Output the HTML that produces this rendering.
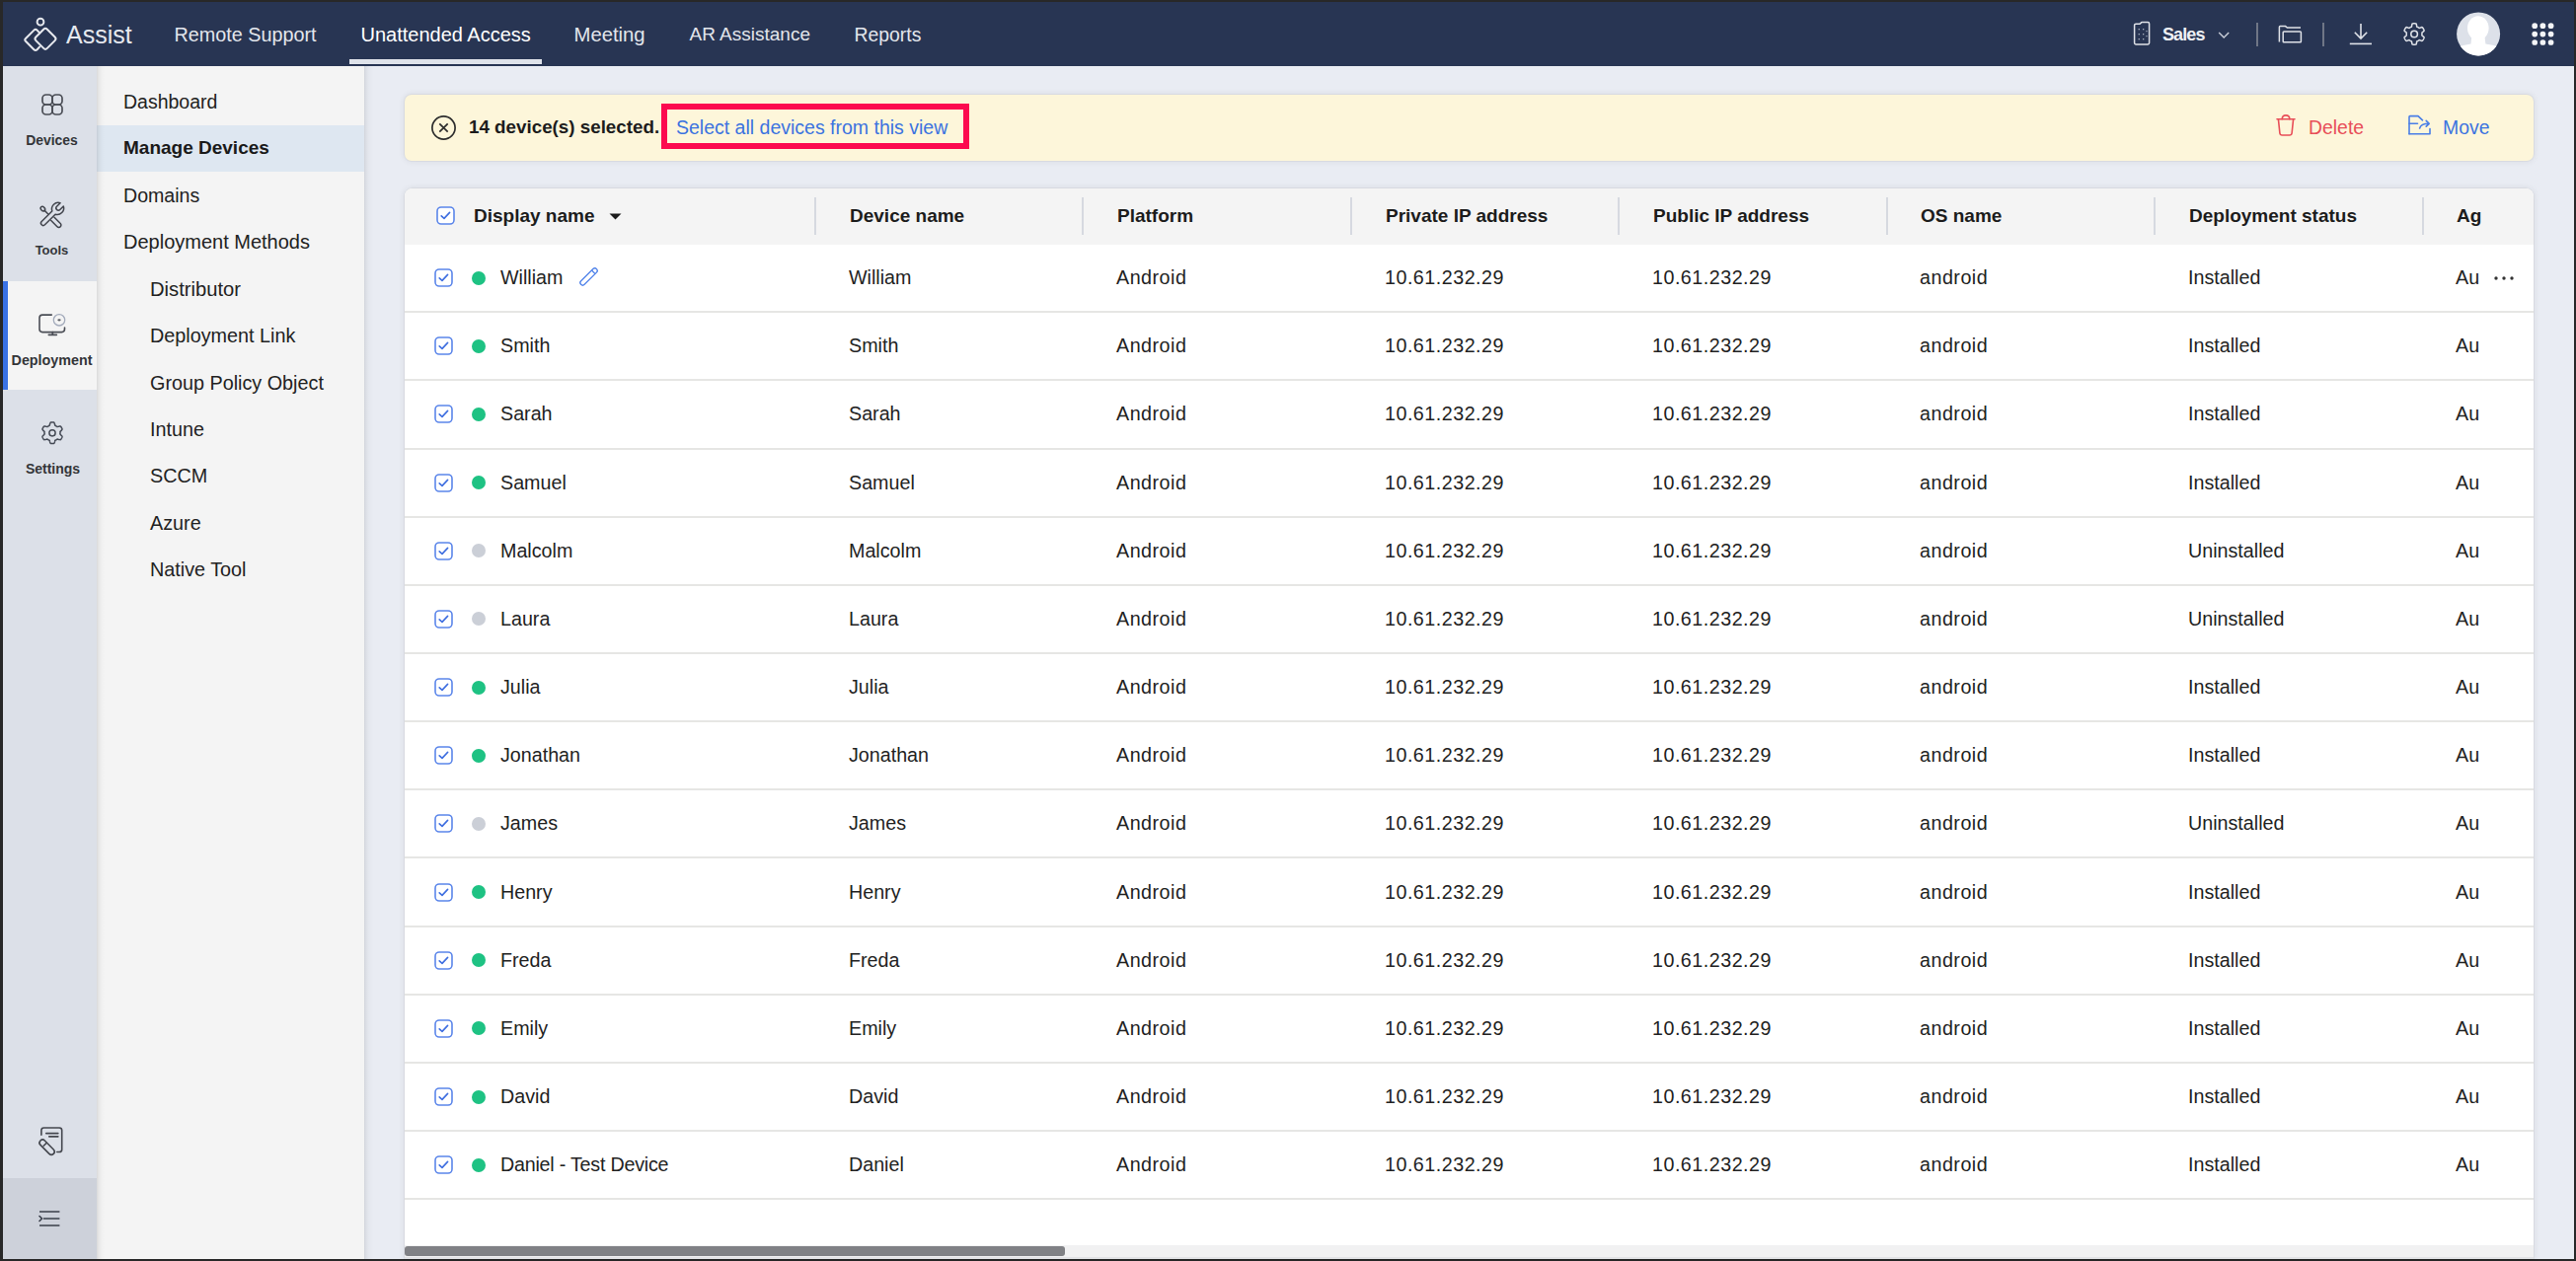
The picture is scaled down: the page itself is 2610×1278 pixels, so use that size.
<!DOCTYPE html><html><head><meta charset="utf-8"><style>
*{margin:0;padding:0;box-sizing:border-box}
html,body{width:2610px;height:1278px;overflow:hidden;background:#282828;font-family:"Liberation Sans", sans-serif;}
.abs{position:absolute}
.t{position:absolute;white-space:nowrap;line-height:24px;}
#nav{position:absolute;left:3px;top:2px;width:2605px;height:65px;background:#283553;}
.nt{color:#e3e6ec;font-size:20px;top:21px}
#rail{position:absolute;left:3px;top:67px;width:95px;height:1209px;background:#dce0e8;}
.rl{font-size:14px;font-weight:700;color:#333538;width:95px;text-align:center;left:0}
#side{position:absolute;left:98px;top:67px;width:271px;height:1209px;background:#f4f4f4;}
#main{position:absolute;left:369px;top:67px;width:2239px;height:1209px;background:#e9ecf3;}
.si{font-size:19.6px;color:#222;}
#banner{position:absolute;left:410px;top:96px;width:2157px;height:67px;background:#fdf6da;border-radius:7px;box-shadow:0 0 0 1px rgba(0,0,0,0.03),0 0 6px 1px rgba(0,0,0,0.07);}
#table{position:absolute;left:410px;top:191px;width:2157px;height:1085px;background:#fff;border-radius:8px 8px 0 0;box-shadow:0 0 0 1px rgba(0,0,0,0.03),0 0 6px 1px rgba(0,0,0,0.07)}
#thead{position:absolute;left:0;top:0;width:2157px;height:57px;background:#f4f4f4;border-radius:8px 8px 0 0}
.ht{font-size:19px;font-weight:700;color:#1c1c1c;}
.rt{font-size:19.7px;color:#222;}
.rline{position:absolute;left:0;width:2157px;height:2px;background:#e6e6e4}
.div{position:absolute;top:9px;width:2px;height:38px;background:#d6d9e0}
.cb{position:absolute}
.dot{position:absolute;width:14px;height:14px;border-radius:50%}
</style></head><body>
<div id="nav">
<svg class="abs" style="left:-3px;top:-2px" width="70" height="60" viewBox="0 0 70 60">
<circle cx="41" cy="22.2" r="3.4" fill="none" stroke="#e8eaef" stroke-width="1.9"/>
<path d="M40.2 33.4 L37.6 30.6 Q36 29 34.4 30.6 L26 39 Q24.6 40.4 26 41.8 L34.4 50.2 Q36 51.8 37.6 50.2 L40.2 47.4" fill="none" stroke="#e8eaef" stroke-width="2" stroke-linecap="round" stroke-linejoin="round"/>
<rect x="37.9" y="31.2" width="16.2" height="16.2" rx="2.6" transform="rotate(45 46 39.3)" fill="none" stroke="#e8eaef" stroke-width="2"/>
</svg>
<div class="t" style="left:64px;top:18.2px;font-size:25px;color:#e6e9ef;line-height:30px">Assist</div>
<div class="t nt" style="left:173.5px;font-size:19.8px;color:#e3e6ec">Remote Support</div>
<div class="t nt" style="left:362.5px;font-size:20.0px;color:#ffffff">Unattended Access</div>
<div class="t nt" style="left:578.5px;font-size:20.3px;color:#e3e6ec">Meeting</div>
<div class="t nt" style="left:695.5px;font-size:19.0px;color:#e3e6ec">AR Assistance</div>
<div class="t nt" style="left:862.5px;font-size:19.4px;color:#e3e6ec">Reports</div>
<div class="abs" style="left:351px;top:58px;width:195px;height:5px;background:#dfe3ea"></div>
<svg class="abs" style="left:2155px;top:17px" width="24" height="30" viewBox="0 0 24 30">
<path d="M4.6 6.6 Q4.6 5.2 6 5.2 L9.6 5.2 Q10.6 5.2 11 4.4 Q11.4 3.6 12.4 3.6 L18.2 3.6 Q19.6 3.6 19.6 5 L19.6 24.6 Q19.6 26 18.2 26 L6 26 Q4.6 26 4.6 24.6 Z" fill="none" stroke="#dfe2e8" stroke-width="1.5"/>
<g fill="#aab1c0"><rect x="8.6" y="10" width="1.3" height="1.3"/><rect x="13" y="10" width="1.3" height="1.3"/><rect x="8.6" y="15" width="1.3" height="1.3"/><rect x="13" y="15" width="1.3" height="1.3"/><rect x="8.6" y="20" width="1.3" height="1.3"/><rect x="13" y="20" width="1.3" height="1.3"/><rect x="16.4" y="12" width="1.2" height="1.2"/><rect x="16.4" y="17" width="1.2" height="1.2"/></g></svg>
<div class="t" style="left:2188px;top:20.5px;font-size:18px;letter-spacing:-0.9px;font-weight:700;color:#eef0f4">Sales</div>
<svg class="abs" style="left:2243px;top:29px" width="14" height="10" viewBox="0 0 14 10"><path d="M2.2 2 L7.2 7 L12.2 2" fill="none" stroke="#c9ced8" stroke-width="1.4"/></svg>
<div class="abs" style="left:2282.5px;top:20.5px;width:2px;height:24.5px;background:#6f7686"></div>
<svg class="abs" style="left:2303px;top:22px" width="30" height="22" viewBox="0 0 30 22">
<path d="M3.4 18.6 L3.4 3.4 Q3.4 2.6 4.2 2.6 L9.6 2.6 L11.4 4 L25 4" fill="none" stroke="#dfe2e8" stroke-width="1.5"/>
<rect x="7.2" y="8" width="18.2" height="10.8" rx="0.8" fill="none" stroke="#dfe2e8" stroke-width="1.5"/></svg>
<div class="abs" style="left:2349.5px;top:20.5px;width:2px;height:24.5px;background:#6f7686"></div>
<svg class="abs" style="left:2375px;top:19px" width="28" height="28" viewBox="0 0 28 28">
<path d="M14 3 L14 18 M7.8 11.8 L14 18 L20.2 11.8" fill="none" stroke="#dfe2e8" stroke-width="1.6"/>
<path d="M2.8 23.4 L25 23.4" stroke="#dfe2e8" stroke-width="1.6"/></svg>
<svg class="abs" style="left:2428px;top:18px" width="30" height="30" viewBox="0 0 30 30">
<path fill="none" stroke="#dfe2e8" stroke-width="1.5" d="M23.00 14.50 L22.99 14.16 L22.97 13.81 L22.93 13.47 L22.88 13.13 L23.26 12.69 L24.08 12.09 L24.87 11.42 L25.15 10.84 L24.99 10.41 L24.80 9.98 L24.59 9.56 L24.37 9.15 L24.12 8.75 L23.86 8.36 L23.59 7.99 L23.30 7.62 L22.65 7.58 L21.68 7.92 L20.75 8.34 L20.18 8.45 L19.91 8.23 L19.63 8.03 L19.34 7.84 L19.05 7.66 L18.75 7.49 L18.44 7.34 L18.12 7.20 L17.80 7.08 L17.61 6.53 L17.51 5.52 L17.32 4.50 L16.96 3.96 L16.50 3.89 L16.03 3.84 L15.57 3.81 L15.10 3.80 L14.63 3.81 L14.17 3.84 L13.70 3.89 L13.24 3.96 L12.88 4.50 L12.69 5.52 L12.59 6.53 L12.40 7.08 L12.08 7.20 L11.76 7.34 L11.45 7.49 L11.15 7.66 L10.86 7.84 L10.57 8.03 L10.29 8.23 L10.02 8.45 L9.45 8.34 L8.52 7.92 L7.55 7.58 L6.90 7.62 L6.61 7.99 L6.34 8.36 L6.08 8.75 L5.83 9.15 L5.61 9.56 L5.40 9.98 L5.21 10.41 L5.05 10.84 L5.33 11.42 L6.12 12.09 L6.94 12.69 L7.32 13.13 L7.27 13.47 L7.23 13.81 L7.21 14.16 L7.20 14.50 L7.21 14.84 L7.23 15.19 L7.27 15.53 L7.32 15.87 L6.94 16.31 L6.12 16.91 L5.33 17.58 L5.05 18.16 L5.21 18.59 L5.40 19.02 L5.61 19.44 L5.83 19.85 L6.08 20.25 L6.34 20.64 L6.61 21.01 L6.90 21.38 L7.55 21.42 L8.52 21.08 L9.45 20.66 L10.02 20.55 L10.29 20.77 L10.57 20.97 L10.86 21.16 L11.15 21.34 L11.45 21.51 L11.76 21.66 L12.08 21.80 L12.40 21.92 L12.59 22.47 L12.69 23.48 L12.88 24.50 L13.24 25.04 L13.70 25.11 L14.17 25.16 L14.63 25.19 L15.10 25.20 L15.57 25.19 L16.03 25.16 L16.50 25.11 L16.96 25.04 L17.32 24.50 L17.51 23.48 L17.61 22.47 L17.80 21.92 L18.12 21.80 L18.44 21.66 L18.75 21.51 L19.05 21.34 L19.34 21.16 L19.63 20.97 L19.91 20.77 L20.18 20.55 L20.75 20.66 L21.68 21.08 L22.65 21.42 L23.30 21.38 L23.59 21.01 L23.86 20.64 L24.12 20.25 L24.37 19.85 L24.59 19.44 L24.80 19.02 L24.99 18.59 L25.15 18.16 L24.87 17.58 L24.08 16.91 L23.26 16.31 L22.88 15.87 L22.93 15.53 L22.97 15.19 L22.99 14.84 Z"/>
<circle cx="15.1" cy="14.5" r="3.3" fill="none" stroke="#dfe2e8" stroke-width="1.6"/></svg>
<svg class="abs" style="left:2486px;top:10px" width="46" height="46" viewBox="0 0 46 46">
<defs><clipPath id="av"><circle cx="22.1" cy="22.4" r="22"/></clipPath></defs>
<circle cx="22.1" cy="22.4" r="22" fill="#dde1e9"/>
<g clip-path="url(#av)" fill="#ffffff"><ellipse cx="21.8" cy="16.6" rx="10.8" ry="12.4"/><path d="M-2 46 L-2 37 Q5 33.6 14.5 32.4 L15.2 26 L28.6 26 L29.4 32.4 Q39 33.6 46 37 L46 46 Z"/></g></svg>
<svg class="abs" style="left:2562px;top:21px" width="26" height="26" viewBox="0 0 26 26"><g fill="#f4f5f7"><circle cx="3.2" cy="3.2" r="2.85"/><circle cx="3.2" cy="11.6" r="2.85"/><circle cx="3.2" cy="20.0" r="2.85"/><circle cx="11.4" cy="3.2" r="2.85"/><circle cx="11.4" cy="11.6" r="2.85"/><circle cx="11.4" cy="20.0" r="2.85"/><circle cx="19.6" cy="3.2" r="2.85"/><circle cx="19.6" cy="11.6" r="2.85"/><circle cx="19.6" cy="20.0" r="2.85"/></g></svg>
</div>
<div id="rail">
<div class="abs" style="left:0;top:218px;width:95px;height:110px;background:#f4f4f4"></div>
<div class="abs" style="left:0;top:218px;width:5px;height:110px;background:#3a72e6"></div>
<svg class="abs" style="left:38px;top:27.3px" width="24" height="24" viewBox="0 0 24 24"><g fill="none" stroke="#4a4d55" stroke-width="1.7">
<rect x="2" y="2" width="10" height="10" rx="3.6"/><rect x="12" y="2" width="10" height="10" rx="3.6"/><rect x="2" y="12" width="10" height="10" rx="3.6"/><rect x="12" y="12" width="10" height="10" rx="3.6"/></g></svg>
<div class="t rl" style="left:2px;top:63px;font-size:13.9px">Devices</div>
<svg class="abs" style="left:27px;top:129px" width="45" height="45" viewBox="0 0 45 45"><g fill="none" stroke="#42454d" stroke-width="1.5" stroke-linejoin="round" stroke-linecap="round">
<path d="M22.78 17.96 A6.6 6.6 0 0 1 31.05 9.7 L27.52 13.22 A2.3 2.3 0 0 0 30.78 16.48 L34.3 12.95 A6.6 6.6 0 0 1 26.04 21.22 L15.43 31.83 A2.3 2.3 0 0 1 12.17 28.57 Z"/>
<ellipse cx="13.4" cy="15.6" rx="2.5" ry="1.9" transform="rotate(45 13.4 15.6)"/>
<path d="M15.2 17.4 L18.6 20.8"/>
<path d="M25.03 24.27 L31.23 30.47 A2.3 2.3 0 0 1 27.97 33.73 L21.77 27.53"/>
</g></svg>
<div class="t rl" style="left:2px;top:175px;font-size:13px">Tools</div>
<svg class="abs" style="left:27px;top:238px" width="45" height="45" viewBox="0 0 45 45"><g fill="none" stroke="#4a4d55" stroke-width="1.6" stroke-linecap="round">
<path d="M22.3 14.1 L13 14.1 Q10 14.1 10 17.1 L10 28.6 Q10 31.6 13 31.6 L32.5 31.6 Q35.5 31.6 35.5 28.6 L35.5 27"/>
<path d="M23.3 31.6 L23.3 34.2 M19.4 34.3 L27.3 34.3" stroke-width="1.8"/></g>
<circle cx="30" cy="19.3" r="5.7" fill="none" stroke="#a3abbb" stroke-width="1.3"/><ellipse cx="30" cy="19.3" rx="1.7" ry="1.1" fill="#5a5d64"/></svg>
<div class="t rl" style="left:2px;top:286px;font-size:14.3px">Deployment</div>
<svg class="abs" style="left:35px;top:357px" width="30" height="30" viewBox="0 0 30 30">
<path fill="none" stroke="#454a55" stroke-width="1.5" d="M23.00 14.80 L22.99 14.45 L22.97 14.10 L22.93 13.76 L23.02 13.39 L23.54 12.91 L24.08 12.37 L24.59 11.78 L25.02 11.15 L24.98 10.67 L24.79 10.24 L24.58 9.81 L24.35 9.40 L24.11 9.00 L23.85 8.61 L23.57 8.23 L23.17 7.95 L22.41 8.01 L21.65 8.15 L20.91 8.35 L20.23 8.56 L19.87 8.45 L19.59 8.25 L19.30 8.05 L19.00 7.87 L18.69 7.70 L18.38 7.55 L18.06 7.41 L17.78 7.15 L17.63 6.46 L17.43 5.72 L17.18 4.99 L16.85 4.30 L16.41 4.09 L15.94 4.04 L15.47 4.01 L15.00 4.00 L14.53 4.01 L14.06 4.04 L13.59 4.09 L13.15 4.30 L12.82 4.99 L12.57 5.72 L12.37 6.46 L12.22 7.15 L11.94 7.41 L11.62 7.55 L11.31 7.70 L11.00 7.87 L10.70 8.05 L10.41 8.25 L10.13 8.45 L9.77 8.56 L9.09 8.35 L8.35 8.15 L7.59 8.01 L6.83 7.95 L6.43 8.23 L6.15 8.61 L5.89 9.00 L5.65 9.40 L5.42 9.81 L5.21 10.24 L5.02 10.67 L4.98 11.15 L5.41 11.78 L5.92 12.37 L6.46 12.91 L6.98 13.39 L7.07 13.76 L7.03 14.10 L7.01 14.45 L7.00 14.80 L7.01 15.15 L7.03 15.50 L7.07 15.84 L6.98 16.21 L6.46 16.69 L5.92 17.23 L5.41 17.82 L4.98 18.45 L5.02 18.93 L5.21 19.36 L5.42 19.79 L5.65 20.20 L5.89 20.60 L6.15 20.99 L6.43 21.37 L6.83 21.65 L7.59 21.59 L8.35 21.45 L9.09 21.25 L9.77 21.04 L10.13 21.15 L10.41 21.35 L10.70 21.55 L11.00 21.73 L11.31 21.90 L11.62 22.05 L11.94 22.19 L12.22 22.45 L12.37 23.14 L12.57 23.88 L12.82 24.61 L13.15 25.30 L13.59 25.51 L14.06 25.56 L14.53 25.59 L15.00 25.60 L15.47 25.59 L15.94 25.56 L16.41 25.51 L16.85 25.30 L17.18 24.61 L17.43 23.88 L17.63 23.14 L17.78 22.45 L18.06 22.19 L18.38 22.05 L18.69 21.90 L19.00 21.73 L19.30 21.55 L19.59 21.35 L19.87 21.15 L20.23 21.04 L20.91 21.25 L21.65 21.45 L22.41 21.59 L23.17 21.65 L23.57 21.37 L23.85 20.99 L24.11 20.60 L24.35 20.20 L24.58 19.79 L24.79 19.36 L24.98 18.93 L25.02 18.45 L24.59 17.82 L24.08 17.23 L23.54 16.69 L23.02 16.21 L22.93 15.84 L22.97 15.50 L22.99 15.15 Z"/>
<circle cx="15" cy="14.8" r="3.1" fill="none" stroke="#454a55" stroke-width="1.5"/></svg>
<div class="t rl" style="left:3px;top:396px;font-size:14px">Settings</div>
<svg class="abs" style="left:27px;top:1063px" width="40" height="45" viewBox="0 0 40 45"><g fill="none" stroke="#44474e" stroke-width="1.6" stroke-linecap="round" stroke-linejoin="round">
<path d="M11.9 20.3 L11.9 15.6 Q11.9 13 14.5 13 L30.1 13 Q32.7 13 32.7 15.6 L32.7 34.9 Q32.7 37.5 30.1 37.5 L27.8 37.5"/>
<path d="M16.8 18.6 L28.8 18.6 M19.8 21.8 L28.8 21.8" stroke-width="1.7"/>
<rect x="8.2" y="29.6" width="18.8" height="6.2" rx="3.1" transform="rotate(45 17.6 32.7)"/>
<path d="M12.6 29.7 L15.4 26.9" transform="translate(1.6 1.6)"/></g></svg>
<div class="abs" style="left:0;top:1127px;width:95px;height:82px;background:#cdd1da"></div>
<svg class="abs" style="left:36px;top:1159px" width="24" height="18" viewBox="0 0 24 18"><g fill="none" stroke="#3a3f4a" stroke-width="1.6">
<path d="M1 2 L21.4 2 M5 9 L21.4 9 M1 16 L21.4 16"/><path d="M1 6.5 L3.5 9 L1 11.5" stroke-linecap="round"/></g></svg>
</div>
<div id="side">
<div class="abs" style="left:0;top:60px;width:271px;height:47px;background:#dee7f1"></div>
<div class="t si" style="left:27px;top:23.9px;font-size:19.5px;">Dashboard</div>
<div class="t si" style="left:27px;top:71.3px;font-size:19.0px;font-weight:700;color:#1a1a1a;">Manage Devices</div>
<div class="t si" style="left:27px;top:118.8px;font-size:19.6px;">Domains</div>
<div class="t si" style="left:27px;top:166.2px;font-size:20.0px;">Deployment Methods</div>
<div class="t si" style="left:54px;top:213.7px;font-size:20.2px;">Distributor</div>
<div class="t si" style="left:54px;top:261.1px;font-size:19.8px;">Deployment Link</div>
<div class="t si" style="left:54px;top:308.5px;font-size:19.8px;">Group Policy Object</div>
<div class="t si" style="left:54px;top:356.0px;font-size:19.8px;">Intune</div>
<div class="t si" style="left:54px;top:403.4px;font-size:19.8px;">SCCM</div>
<div class="t si" style="left:54px;top:450.9px;font-size:19.8px;">Azure</div>
<div class="t si" style="left:54px;top:498.3px;font-size:19.8px;">Native Tool</div>
</div>
<div id="main"></div>
<div class="abs" style="left:369px;top:67px;width:10px;height:1209px;background:linear-gradient(90deg,rgba(0,0,0,0.10) 0px,rgba(0,0,0,0.05) 2px,rgba(0,0,0,0.02) 5px,rgba(0,0,0,0) 10px)"></div>
<div class="abs" style="left:98px;top:67px;width:8px;height:1209px;background:linear-gradient(90deg,rgba(0,0,0,0.11) 0px,rgba(0,0,0,0.055) 2px,rgba(0,0,0,0.02) 5px,rgba(0,0,0,0) 8px)"></div>
<div id="banner">
<svg class="abs" style="left:26px;top:20px" width="27" height="27" viewBox="0 0 27 27"><circle cx="13.5" cy="13.5" r="11.6" fill="none" stroke="#2d2d2d" stroke-width="1.7"/><path d="M9.3 9.3 L17.7 17.7 M17.7 9.3 L9.3 17.7" stroke="#2d2d2d" stroke-width="1.7"/></svg>
<div class="t" style="left:65px;top:21px;font-size:18.8px;font-weight:700;color:#1c1c1c">14 device(s) selected.</div>
<div class="abs" style="left:260px;top:9px;width:312px;height:46px;border:6px solid #fc0a4f"></div>
<div class="t" style="left:275px;top:21px;font-size:19.5px;color:#3b73e0">Select all devices from this view</div>
<svg class="abs" style="left:1895px;top:20px" width="22" height="26" viewBox="0 0 22 26"><g fill="none" stroke="#e84e58" stroke-width="1.6" stroke-linejoin="round" stroke-linecap="round">
<path d="M2 4.7 L20 4.7 M3.4 4.7 L4.9 19 Q5.2 21 7.2 21 L14.8 21 Q16.8 21 17.1 19 L18.6 4.7"/><path d="M7.2 4.7 Q7.2 0.9 11 0.9 Q14.8 0.9 14.8 4.7"/></g></svg>
<div class="t" style="left:1929px;top:21px;font-size:19.4px;color:#e84e58">Delete</div>
<svg class="abs" style="left:2029px;top:18px" width="26" height="26" viewBox="0 0 26 26"><g fill="none" stroke="#4a7ee6" stroke-width="1.6" stroke-linejoin="round" stroke-linecap="round">
<path d="M2 21.7 L2 4.4 Q2 3.6 2.8 3.6 L11 3.6 L15.5 7.8"/><path d="M2 21.7 L23 21.7 L23 16.5"/><path d="M2 11.3 L10.5 11.3"/><path d="M12.6 16 Q14 11.3 21.8 11.3 M19.2 8.4 L22.2 11.3 L19.2 14.2"/></g></svg>
<div class="t" style="left:2065px;top:21px;font-size:19.4px;color:#3b73e0">Move</div>
</div>
<div id="table">
<div id="thead">
<svg class="cb" style="left:32px;top:18px" width="19" height="19" viewBox="0 0 19 19"><rect x="1" y="1" width="17" height="17" rx="4" fill="#fff" stroke="#5b86ea" stroke-width="1.6"/><path d="M5.2 9.8 L8 12.4 L13.6 6.4" fill="none" stroke="#3f6fe0" stroke-width="1.6" stroke-linecap="round" stroke-linejoin="round"/></svg>
<div class="t ht" style="left:70px;top:16px">Display name</div>
<svg class="abs" style="left:207px;top:25px" width="13" height="7" viewBox="0 0 13 7"><path d="M0.5 0.5 L12.5 0.5 L6.5 6.5 Z" fill="#1c1c1c"/></svg>
<div class="div" style="left:415px"></div>
<div class="t ht" style="left:451px;top:16px">Device name</div>
<div class="div" style="left:686px"></div>
<div class="t ht" style="left:722px;top:16px">Platform</div>
<div class="div" style="left:958px"></div>
<div class="t ht" style="left:994px;top:16px">Private IP address</div>
<div class="div" style="left:1229px"></div>
<div class="t ht" style="left:1265px;top:16px">Public IP address</div>
<div class="div" style="left:1501px"></div>
<div class="t ht" style="left:1536px;top:16px">OS name</div>
<div class="div" style="left:1772px"></div>
<div class="t ht" style="left:1808px;top:16px">Deployment status</div>
<div class="div" style="left:2044px"></div>
<div class="t ht" style="left:2079px;top:16px">Ag</div>
</div>
<svg class="cb" style="left:30px;top:81.1px" width="19" height="19" viewBox="0 0 19 19"><rect x="1" y="1" width="17" height="17" rx="4" fill="#fff" stroke="#5b86ea" stroke-width="1.6"/><path d="M5.2 9.8 L8 12.4 L13.6 6.4" fill="none" stroke="#3f6fe0" stroke-width="1.6" stroke-linecap="round" stroke-linejoin="round"/></svg>
<div class="dot" style="left:68px;top:83.6px;background:#1ec283"></div>
<div class="t rt" style="left:97px;top:78.1px">William</div>
<div class="t rt" style="left:450px;top:78.1px">William</div>
<div class="t rt" style="left:721px;top:78.1px;letter-spacing:0.5px">Android</div>
<div class="t rt" style="left:993px;top:78.1px;letter-spacing:0.5px">10.61.232.29</div>
<div class="t rt" style="left:1264px;top:78.1px;letter-spacing:0.5px">10.61.232.29</div>
<div class="t rt" style="left:1535px;top:78.1px;letter-spacing:0.5px">android</div>
<div class="t rt" style="left:1807px;top:78.1px">Installed</div>
<div class="t rt" style="left:2078px;top:78.1px">Au</div>
<svg class="abs" style="left:170px;top:74.0px" width="35" height="30" viewBox="0 0 35 30"><g fill="none" stroke="#5284ea" stroke-width="1.35"><rect x="5.4" y="12.95" width="22.3" height="5" rx="2.5" transform="rotate(-44.7 16.55 15.45)"/><path d="M19.52 9.0 L23.04 12.55"/></g></svg>
<svg class="abs" style="left:2116px;top:87.6px" width="22" height="6" viewBox="0 0 22 6"><g fill="#333"><circle cx="3" cy="3" r="1.7"/><circle cx="11" cy="3" r="1.7"/><circle cx="19" cy="3" r="1.7"/></g></svg>
<div class="rline" style="top:124.2px"></div>
<svg class="cb" style="left:30px;top:150.2px" width="19" height="19" viewBox="0 0 19 19"><rect x="1" y="1" width="17" height="17" rx="4" fill="#fff" stroke="#5b86ea" stroke-width="1.6"/><path d="M5.2 9.8 L8 12.4 L13.6 6.4" fill="none" stroke="#3f6fe0" stroke-width="1.6" stroke-linecap="round" stroke-linejoin="round"/></svg>
<div class="dot" style="left:68px;top:152.7px;background:#1ec283"></div>
<div class="t rt" style="left:97px;top:147.2px">Smith</div>
<div class="t rt" style="left:450px;top:147.2px">Smith</div>
<div class="t rt" style="left:721px;top:147.2px;letter-spacing:0.5px">Android</div>
<div class="t rt" style="left:993px;top:147.2px;letter-spacing:0.5px">10.61.232.29</div>
<div class="t rt" style="left:1264px;top:147.2px;letter-spacing:0.5px">10.61.232.29</div>
<div class="t rt" style="left:1535px;top:147.2px;letter-spacing:0.5px">android</div>
<div class="t rt" style="left:1807px;top:147.2px">Installed</div>
<div class="t rt" style="left:2078px;top:147.2px">Au</div>
<div class="rline" style="top:193.3px"></div>
<svg class="cb" style="left:30px;top:219.4px" width="19" height="19" viewBox="0 0 19 19"><rect x="1" y="1" width="17" height="17" rx="4" fill="#fff" stroke="#5b86ea" stroke-width="1.6"/><path d="M5.2 9.8 L8 12.4 L13.6 6.4" fill="none" stroke="#3f6fe0" stroke-width="1.6" stroke-linecap="round" stroke-linejoin="round"/></svg>
<div class="dot" style="left:68px;top:221.9px;background:#1ec283"></div>
<div class="t rt" style="left:97px;top:216.4px">Sarah</div>
<div class="t rt" style="left:450px;top:216.4px">Sarah</div>
<div class="t rt" style="left:721px;top:216.4px;letter-spacing:0.5px">Android</div>
<div class="t rt" style="left:993px;top:216.4px;letter-spacing:0.5px">10.61.232.29</div>
<div class="t rt" style="left:1264px;top:216.4px;letter-spacing:0.5px">10.61.232.29</div>
<div class="t rt" style="left:1535px;top:216.4px;letter-spacing:0.5px">android</div>
<div class="t rt" style="left:1807px;top:216.4px">Installed</div>
<div class="t rt" style="left:2078px;top:216.4px">Au</div>
<div class="rline" style="top:262.5px"></div>
<svg class="cb" style="left:30px;top:288.6px" width="19" height="19" viewBox="0 0 19 19"><rect x="1" y="1" width="17" height="17" rx="4" fill="#fff" stroke="#5b86ea" stroke-width="1.6"/><path d="M5.2 9.8 L8 12.4 L13.6 6.4" fill="none" stroke="#3f6fe0" stroke-width="1.6" stroke-linecap="round" stroke-linejoin="round"/></svg>
<div class="dot" style="left:68px;top:291.1px;background:#1ec283"></div>
<div class="t rt" style="left:97px;top:285.6px">Samuel</div>
<div class="t rt" style="left:450px;top:285.6px">Samuel</div>
<div class="t rt" style="left:721px;top:285.6px;letter-spacing:0.5px">Android</div>
<div class="t rt" style="left:993px;top:285.6px;letter-spacing:0.5px">10.61.232.29</div>
<div class="t rt" style="left:1264px;top:285.6px;letter-spacing:0.5px">10.61.232.29</div>
<div class="t rt" style="left:1535px;top:285.6px;letter-spacing:0.5px">android</div>
<div class="t rt" style="left:1807px;top:285.6px">Installed</div>
<div class="t rt" style="left:2078px;top:285.6px">Au</div>
<div class="rline" style="top:331.6px"></div>
<svg class="cb" style="left:30px;top:357.7px" width="19" height="19" viewBox="0 0 19 19"><rect x="1" y="1" width="17" height="17" rx="4" fill="#fff" stroke="#5b86ea" stroke-width="1.6"/><path d="M5.2 9.8 L8 12.4 L13.6 6.4" fill="none" stroke="#3f6fe0" stroke-width="1.6" stroke-linecap="round" stroke-linejoin="round"/></svg>
<div class="dot" style="left:68px;top:360.2px;background:#cbcfd7"></div>
<div class="t rt" style="left:97px;top:354.7px">Malcolm</div>
<div class="t rt" style="left:450px;top:354.7px">Malcolm</div>
<div class="t rt" style="left:721px;top:354.7px;letter-spacing:0.5px">Android</div>
<div class="t rt" style="left:993px;top:354.7px;letter-spacing:0.5px">10.61.232.29</div>
<div class="t rt" style="left:1264px;top:354.7px;letter-spacing:0.5px">10.61.232.29</div>
<div class="t rt" style="left:1535px;top:354.7px;letter-spacing:0.5px">android</div>
<div class="t rt" style="left:1807px;top:354.7px">Uninstalled</div>
<div class="t rt" style="left:2078px;top:354.7px">Au</div>
<div class="rline" style="top:400.8px"></div>
<svg class="cb" style="left:30px;top:426.9px" width="19" height="19" viewBox="0 0 19 19"><rect x="1" y="1" width="17" height="17" rx="4" fill="#fff" stroke="#5b86ea" stroke-width="1.6"/><path d="M5.2 9.8 L8 12.4 L13.6 6.4" fill="none" stroke="#3f6fe0" stroke-width="1.6" stroke-linecap="round" stroke-linejoin="round"/></svg>
<div class="dot" style="left:68px;top:429.4px;background:#cbcfd7"></div>
<div class="t rt" style="left:97px;top:423.9px">Laura</div>
<div class="t rt" style="left:450px;top:423.9px">Laura</div>
<div class="t rt" style="left:721px;top:423.9px;letter-spacing:0.5px">Android</div>
<div class="t rt" style="left:993px;top:423.9px;letter-spacing:0.5px">10.61.232.29</div>
<div class="t rt" style="left:1264px;top:423.9px;letter-spacing:0.5px">10.61.232.29</div>
<div class="t rt" style="left:1535px;top:423.9px;letter-spacing:0.5px">android</div>
<div class="t rt" style="left:1807px;top:423.9px">Uninstalled</div>
<div class="t rt" style="left:2078px;top:423.9px">Au</div>
<div class="rline" style="top:470.0px"></div>
<svg class="cb" style="left:30px;top:496.0px" width="19" height="19" viewBox="0 0 19 19"><rect x="1" y="1" width="17" height="17" rx="4" fill="#fff" stroke="#5b86ea" stroke-width="1.6"/><path d="M5.2 9.8 L8 12.4 L13.6 6.4" fill="none" stroke="#3f6fe0" stroke-width="1.6" stroke-linecap="round" stroke-linejoin="round"/></svg>
<div class="dot" style="left:68px;top:498.5px;background:#1ec283"></div>
<div class="t rt" style="left:97px;top:493.0px">Julia</div>
<div class="t rt" style="left:450px;top:493.0px">Julia</div>
<div class="t rt" style="left:721px;top:493.0px;letter-spacing:0.5px">Android</div>
<div class="t rt" style="left:993px;top:493.0px;letter-spacing:0.5px">10.61.232.29</div>
<div class="t rt" style="left:1264px;top:493.0px;letter-spacing:0.5px">10.61.232.29</div>
<div class="t rt" style="left:1535px;top:493.0px;letter-spacing:0.5px">android</div>
<div class="t rt" style="left:1807px;top:493.0px">Installed</div>
<div class="t rt" style="left:2078px;top:493.0px">Au</div>
<div class="rline" style="top:539.1px"></div>
<svg class="cb" style="left:30px;top:565.2px" width="19" height="19" viewBox="0 0 19 19"><rect x="1" y="1" width="17" height="17" rx="4" fill="#fff" stroke="#5b86ea" stroke-width="1.6"/><path d="M5.2 9.8 L8 12.4 L13.6 6.4" fill="none" stroke="#3f6fe0" stroke-width="1.6" stroke-linecap="round" stroke-linejoin="round"/></svg>
<div class="dot" style="left:68px;top:567.7px;background:#1ec283"></div>
<div class="t rt" style="left:97px;top:562.2px">Jonathan</div>
<div class="t rt" style="left:450px;top:562.2px">Jonathan</div>
<div class="t rt" style="left:721px;top:562.2px;letter-spacing:0.5px">Android</div>
<div class="t rt" style="left:993px;top:562.2px;letter-spacing:0.5px">10.61.232.29</div>
<div class="t rt" style="left:1264px;top:562.2px;letter-spacing:0.5px">10.61.232.29</div>
<div class="t rt" style="left:1535px;top:562.2px;letter-spacing:0.5px">android</div>
<div class="t rt" style="left:1807px;top:562.2px">Installed</div>
<div class="t rt" style="left:2078px;top:562.2px">Au</div>
<div class="rline" style="top:608.3px"></div>
<svg class="cb" style="left:30px;top:634.4px" width="19" height="19" viewBox="0 0 19 19"><rect x="1" y="1" width="17" height="17" rx="4" fill="#fff" stroke="#5b86ea" stroke-width="1.6"/><path d="M5.2 9.8 L8 12.4 L13.6 6.4" fill="none" stroke="#3f6fe0" stroke-width="1.6" stroke-linecap="round" stroke-linejoin="round"/></svg>
<div class="dot" style="left:68px;top:636.9px;background:#cbcfd7"></div>
<div class="t rt" style="left:97px;top:631.4px">James</div>
<div class="t rt" style="left:450px;top:631.4px">James</div>
<div class="t rt" style="left:721px;top:631.4px;letter-spacing:0.5px">Android</div>
<div class="t rt" style="left:993px;top:631.4px;letter-spacing:0.5px">10.61.232.29</div>
<div class="t rt" style="left:1264px;top:631.4px;letter-spacing:0.5px">10.61.232.29</div>
<div class="t rt" style="left:1535px;top:631.4px;letter-spacing:0.5px">android</div>
<div class="t rt" style="left:1807px;top:631.4px">Uninstalled</div>
<div class="t rt" style="left:2078px;top:631.4px">Au</div>
<div class="rline" style="top:677.4px"></div>
<svg class="cb" style="left:30px;top:703.5px" width="19" height="19" viewBox="0 0 19 19"><rect x="1" y="1" width="17" height="17" rx="4" fill="#fff" stroke="#5b86ea" stroke-width="1.6"/><path d="M5.2 9.8 L8 12.4 L13.6 6.4" fill="none" stroke="#3f6fe0" stroke-width="1.6" stroke-linecap="round" stroke-linejoin="round"/></svg>
<div class="dot" style="left:68px;top:706.0px;background:#1ec283"></div>
<div class="t rt" style="left:97px;top:700.5px">Henry</div>
<div class="t rt" style="left:450px;top:700.5px">Henry</div>
<div class="t rt" style="left:721px;top:700.5px;letter-spacing:0.5px">Android</div>
<div class="t rt" style="left:993px;top:700.5px;letter-spacing:0.5px">10.61.232.29</div>
<div class="t rt" style="left:1264px;top:700.5px;letter-spacing:0.5px">10.61.232.29</div>
<div class="t rt" style="left:1535px;top:700.5px;letter-spacing:0.5px">android</div>
<div class="t rt" style="left:1807px;top:700.5px">Installed</div>
<div class="t rt" style="left:2078px;top:700.5px">Au</div>
<div class="rline" style="top:746.6px"></div>
<svg class="cb" style="left:30px;top:772.7px" width="19" height="19" viewBox="0 0 19 19"><rect x="1" y="1" width="17" height="17" rx="4" fill="#fff" stroke="#5b86ea" stroke-width="1.6"/><path d="M5.2 9.8 L8 12.4 L13.6 6.4" fill="none" stroke="#3f6fe0" stroke-width="1.6" stroke-linecap="round" stroke-linejoin="round"/></svg>
<div class="dot" style="left:68px;top:775.2px;background:#1ec283"></div>
<div class="t rt" style="left:97px;top:769.7px">Freda</div>
<div class="t rt" style="left:450px;top:769.7px">Freda</div>
<div class="t rt" style="left:721px;top:769.7px;letter-spacing:0.5px">Android</div>
<div class="t rt" style="left:993px;top:769.7px;letter-spacing:0.5px">10.61.232.29</div>
<div class="t rt" style="left:1264px;top:769.7px;letter-spacing:0.5px">10.61.232.29</div>
<div class="t rt" style="left:1535px;top:769.7px;letter-spacing:0.5px">android</div>
<div class="t rt" style="left:1807px;top:769.7px">Installed</div>
<div class="t rt" style="left:2078px;top:769.7px">Au</div>
<div class="rline" style="top:815.8px"></div>
<svg class="cb" style="left:30px;top:841.8px" width="19" height="19" viewBox="0 0 19 19"><rect x="1" y="1" width="17" height="17" rx="4" fill="#fff" stroke="#5b86ea" stroke-width="1.6"/><path d="M5.2 9.8 L8 12.4 L13.6 6.4" fill="none" stroke="#3f6fe0" stroke-width="1.6" stroke-linecap="round" stroke-linejoin="round"/></svg>
<div class="dot" style="left:68px;top:844.3px;background:#1ec283"></div>
<div class="t rt" style="left:97px;top:838.8px">Emily</div>
<div class="t rt" style="left:450px;top:838.8px">Emily</div>
<div class="t rt" style="left:721px;top:838.8px;letter-spacing:0.5px">Android</div>
<div class="t rt" style="left:993px;top:838.8px;letter-spacing:0.5px">10.61.232.29</div>
<div class="t rt" style="left:1264px;top:838.8px;letter-spacing:0.5px">10.61.232.29</div>
<div class="t rt" style="left:1535px;top:838.8px;letter-spacing:0.5px">android</div>
<div class="t rt" style="left:1807px;top:838.8px">Installed</div>
<div class="t rt" style="left:2078px;top:838.8px">Au</div>
<div class="rline" style="top:884.9px"></div>
<svg class="cb" style="left:30px;top:911.0px" width="19" height="19" viewBox="0 0 19 19"><rect x="1" y="1" width="17" height="17" rx="4" fill="#fff" stroke="#5b86ea" stroke-width="1.6"/><path d="M5.2 9.8 L8 12.4 L13.6 6.4" fill="none" stroke="#3f6fe0" stroke-width="1.6" stroke-linecap="round" stroke-linejoin="round"/></svg>
<div class="dot" style="left:68px;top:913.5px;background:#1ec283"></div>
<div class="t rt" style="left:97px;top:908.0px">David</div>
<div class="t rt" style="left:450px;top:908.0px">David</div>
<div class="t rt" style="left:721px;top:908.0px;letter-spacing:0.5px">Android</div>
<div class="t rt" style="left:993px;top:908.0px;letter-spacing:0.5px">10.61.232.29</div>
<div class="t rt" style="left:1264px;top:908.0px;letter-spacing:0.5px">10.61.232.29</div>
<div class="t rt" style="left:1535px;top:908.0px;letter-spacing:0.5px">android</div>
<div class="t rt" style="left:1807px;top:908.0px">Installed</div>
<div class="t rt" style="left:2078px;top:908.0px">Au</div>
<div class="rline" style="top:954.1px"></div>
<svg class="cb" style="left:30px;top:980.2px" width="19" height="19" viewBox="0 0 19 19"><rect x="1" y="1" width="17" height="17" rx="4" fill="#fff" stroke="#5b86ea" stroke-width="1.6"/><path d="M5.2 9.8 L8 12.4 L13.6 6.4" fill="none" stroke="#3f6fe0" stroke-width="1.6" stroke-linecap="round" stroke-linejoin="round"/></svg>
<div class="dot" style="left:68px;top:982.7px;background:#1ec283"></div>
<div class="t rt" style="left:97px;top:977.2px;letter-spacing:-0.22px">Daniel - Test Device</div>
<div class="t rt" style="left:450px;top:977.2px">Daniel</div>
<div class="t rt" style="left:721px;top:977.2px;letter-spacing:0.5px">Android</div>
<div class="t rt" style="left:993px;top:977.2px;letter-spacing:0.5px">10.61.232.29</div>
<div class="t rt" style="left:1264px;top:977.2px;letter-spacing:0.5px">10.61.232.29</div>
<div class="t rt" style="left:1535px;top:977.2px;letter-spacing:0.5px">android</div>
<div class="t rt" style="left:1807px;top:977.2px">Installed</div>
<div class="t rt" style="left:2078px;top:977.2px">Au</div>
<div class="rline" style="top:1023.2px"></div>
<div class="abs" style="left:0;top:1071px;width:2157px;height:12px;background:#f1f1f2"></div>
<div class="abs" style="left:0;top:1083px;width:2157px;height:2px;background:#e2e3e6"></div>
<div class="abs" style="left:0;top:1071.5px;width:669px;height:10.5px;background:#808185;border-radius:3px"></div>
</div>
</body></html>
